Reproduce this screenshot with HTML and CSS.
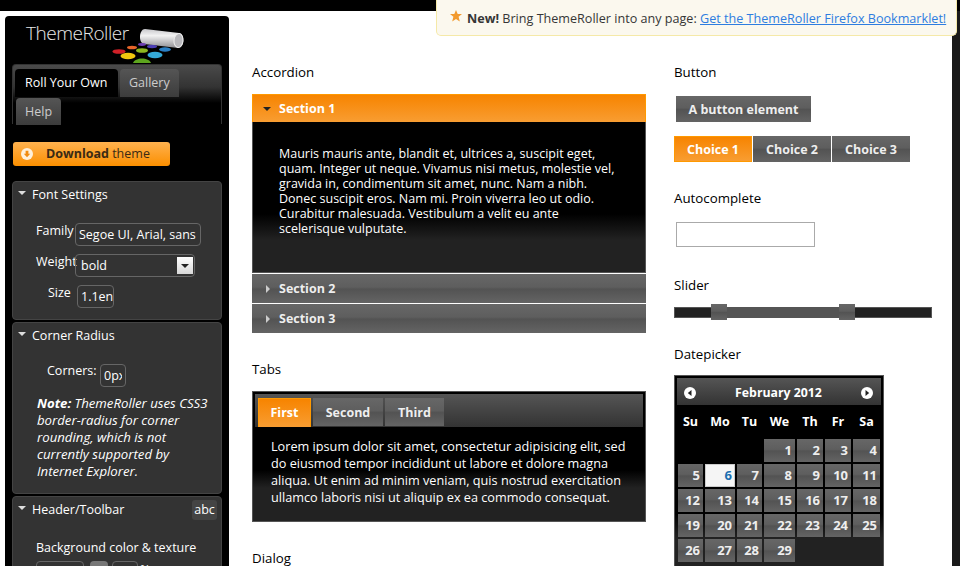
FILE: index.html
```html
<!DOCTYPE html>
<html lang="en">
<head>
<meta charset="utf-8">
<title>ThemeRoller</title>
<link rel="stylesheet" href="styles.css">
</head>
<body>
<div class="topband"></div>
<div class="shell">
  <div class="content">
    <aside class="sidebar">
      <div class="brand">
        <span class="brand-name">ThemeRoller</span>
        <svg class="brand-art" width="76" height="36" viewBox="110 28 76 36">
          <defs>
            <linearGradient id="rollerFill" x1="0" y1="0" x2="0" y2="1">
              <stop offset="0" stop-color="#c8c8cc"/><stop offset=".35" stop-color="#f2f2f2"/><stop offset="1" stop-color="#8f8f94"/>
            </linearGradient>
          </defs>
          <path d="M145 29 L179 33 C185 34 185 48 178 48 L144 44 C138 43 139 29 145 29Z" fill="url(#rollerFill)"/>
          <ellipse cx="178.500" cy="40.500" rx="4.500" ry="7" transform="rotate(6 178.500 40.500)" fill="#b9b9bd" stroke="#eee"/>
          <ellipse cx="119" cy="51.500" rx="6.500" ry="2.300" fill="#cf2027"/>
          <ellipse cx="132" cy="47.500" rx="5" ry="1.800" fill="#e8652a"/>
          <ellipse cx="142" cy="44.500" rx="4" ry="1.400" fill="#6d3fb0"/>
          <ellipse cx="152" cy="46.500" rx="5" ry="1.700" fill="#4c3fb5"/>
          <ellipse cx="142" cy="50.500" rx="6" ry="2.300" fill="#8db81f"/>
          <ellipse cx="165" cy="49.500" rx="6" ry="2.200" fill="#2a7fc4"/>
          <ellipse cx="128" cy="56" rx="7.500" ry="3.200" fill="#f2c80f"/>
          <ellipse cx="155" cy="55" rx="7.500" ry="3.200" fill="#35a9d8"/>
          <path d="M133 63 C135 57 149 57 151 63Z" fill="#5da51e"/>
        </svg>
      </div>

      <div class="side-tabs">
        <a class="side-tab side-tab-on">Roll Your Own</a>
        <a class="side-tab">Gallery</a>
        <a class="side-tab side-tab-help">Help</a>
      </div>

      <a class="download">
        <svg class="download-icon" width="12" height="12" viewBox="0 0 12 12"><circle cx="6" cy="6" r="6" fill="#fff0da"/><path d="M4.600 2.800h2.800v3h1.800L6 9.200 2.800 5.800h1.800z" fill="#f28c10"/></svg>
        <span class="download-text"><b>Download</b> theme</span>
      </a>

      <section class="panel panel-font">
        <h3 class="panel-head"><i class="tri-down"></i>Font Settings</h3>
        <div class="field field-family">
          <label class="field-label">Family</label>
          <span class="box box-family"><span class="box-clip">Segoe UI, Arial, sans</span></span>
        </div>
        <div class="field field-weight">
          <label class="field-label">Weight</label>
          <span class="box box-weight">bold<i class="select-arrow"><i class="tri-dark"></i></i></span>
        </div>
        <div class="field field-size">
          <label class="field-label">Size</label>
          <span class="box box-size"><span class="box-clip">1.1en</span></span>
        </div>
      </section>

      <section class="panel panel-corner">
        <h3 class="panel-head"><i class="tri-down"></i>Corner Radius</h3>
        <div class="field field-corners">
          <label class="field-label">Corners:</label>
          <span class="box box-corners"><span class="box-clip">0px</span></span>
        </div>
        <p class="note"><b>Note:</b> ThemeRoller uses CSS3 border-radius for corner rounding, which is not currently supported by Internet Explorer.</p>
      </section>

      <section class="panel panel-header">
        <h3 class="panel-head"><i class="tri-down"></i>Header/Toolbar<span class="abc">abc</span></h3>
        <div class="bg-label">Background color &amp; texture</div>
        <div class="bg-row">
          <span class="box box-color"></span>
          <span class="swatch"></span>
          <span class="box box-pct"></span>
          <span class="pct">%</span>
        </div>
      </section>
    </aside>

    <main class="col-left">
      <h2 class="title title-first">Accordion</h2>
      <div class="accordion">
        <h3 class="acc-head acc-head-on"><i class="tri-dark"></i>Section 1</h3>
        <div class="acc-body">
          <p>Mauris mauris ante, blandit et, ultrices a, suscipit eget, quam. Integer ut neque. Vivamus nisi metus, molestie vel, gravida in, condimentum sit amet, nunc. Nam a nibh. Donec suscipit eros. Nam mi. Proin viverra leo ut odio. Curabitur malesuada. Vestibulum a velit eu ante scelerisque vulputate.</p>
        </div>
        <h3 class="acc-head glass"><i class="tri-right"></i>Section 2</h3>
        <h3 class="acc-head glass"><i class="tri-right"></i>Section 3</h3>
      </div>

      <h2 class="title title-tabs">Tabs</h2>
      <div class="tabs">
        <div class="tab-bar">
          <a class="tab tab-on">First</a>
          <a class="tab glass">Second</a>
          <a class="tab glass">Third</a>
        </div>
        <p class="tab-body">Lorem ipsum dolor sit amet, consectetur adipisicing elit, sed do eiusmod tempor incididunt ut labore et dolore magna aliqua. Ut enim ad minim veniam, quis nostrud exercitation ullamco laboris nisi ut aliquip ex ea commodo consequat.</p>
      </div>

      <h2 class="title title-dialog">Dialog</h2>
    </main>

    <div class="col-right">
      <h2 class="title title-first">Button</h2>
      <a class="btn btn-single glass">A button element</a>
      <div class="btn-set">
        <a class="btn btn-choice btn-on">Choice 1</a>
        <a class="btn btn-choice glass">Choice 2</a>
        <a class="btn btn-choice glass">Choice 3</a>
      </div>

      <h2 class="title title-auto">Autocomplete</h2>
      <div class="auto-input"></div>

      <h2 class="title title-slider">Slider</h2>
      <div class="slider">
        <span class="slider-end slider-end-a"></span>
        <span class="handle glass"></span>
        <span class="slider-range"></span>
        <span class="handle glass"></span>
        <span class="slider-end"></span>
      </div>

      <h2 class="title title-date">Datepicker</h2>
      <div class="datepicker">
        <div class="dp-head">
          <svg class="dp-nav" width="12" height="12" viewBox="0 0 12 12"><circle cx="6" cy="6" r="6" fill="#fff"/><path d="M7.500 3v6L3.800 6z" fill="#222"/></svg>
          <span class="dp-month">February 2012</span>
          <svg class="dp-nav" width="12" height="12" viewBox="0 0 12 12"><circle cx="6" cy="6" r="6" fill="#fff"/><path d="M4.500 3v6L8.200 6z" fill="#222"/></svg>
        </div>
        <div class="dp-grid">
          <span class="dp-dow">Su</span><span class="dp-dow">Mo</span><span class="dp-dow">Tu</span><span class="dp-dow">We</span><span class="dp-dow">Th</span><span class="dp-dow">Fr</span><span class="dp-dow">Sa</span>
          <span></span><span></span><span></span>
          <a class="dp-day glass">1</a><a class="dp-day glass">2</a><a class="dp-day glass">3</a><a class="dp-day glass">4</a>
          <a class="dp-day glass">5</a><a class="dp-day dp-today">6</a><a class="dp-day glass">7</a><a class="dp-day glass">8</a><a class="dp-day glass">9</a><a class="dp-day glass">10</a><a class="dp-day glass">11</a>
          <a class="dp-day glass">12</a><a class="dp-day glass">13</a><a class="dp-day glass">14</a><a class="dp-day glass">15</a><a class="dp-day glass">16</a><a class="dp-day glass">17</a><a class="dp-day glass">18</a>
          <a class="dp-day glass">19</a><a class="dp-day glass">20</a><a class="dp-day glass">21</a><a class="dp-day glass">22</a><a class="dp-day glass">23</a><a class="dp-day glass">24</a><a class="dp-day glass">25</a>
          <a class="dp-day glass">26</a><a class="dp-day glass">27</a><a class="dp-day glass">28</a><a class="dp-day glass">29</a>
        </div>
      </div>
    </div>
  </div>
</div>

<div class="notice">
  <svg class="notice-star" width="12" height="12" viewBox="0 0 12 12"><path d="M6 0l1.700 4H12L8.600 6.800 9.800 11.500 6 8.900 2.200 11.500 3.400 6.800 0 4h4.300z" fill="#f29a2e"/></svg>
  <span class="notice-text"><b>New!</b> Bring ThemeRoller into any page: <a class="notice-link">Get the ThemeRoller Firefox Bookmarklet!</a></span>
</div>
</body>
</html>
```

FILE: styles.css
```css
* { box-sizing: border-box; }
html, body { margin: 0; padding: 0; height: 566px; overflow: hidden; background: #fff; }
body { font: 12.5px/17px "Open Sans", "Noto Sans", sans-serif; color: #000; }
h2, h3, p { margin: 0; font-size: inherit; font-weight: normal; }
i { font-style: normal; }

.topband { height: 11px; background: #000; }
.shell { background: #1a1a1a; padding-right: 8px; height: 555px; }
.content { display: flex; background: #fff; height: 555px; padding-left: 5px; overflow: hidden; }

/* sidebar */
.sidebar { width: 224px; flex: none; margin-top: 5px; height: 700px; padding: 0 7px; background: #000; border-radius: 4px 4px 0 0; color: #fff; }
.brand { position: relative; height: 48px; padding: 5px 0 0 14px; }
.brand-name { font-size: 19px; line-height: 24px; font-weight: 300; color: #e8e8e8; letter-spacing: -.45px; }
.brand-art { position: absolute; left: 98px; top: 12px; }
.side-tabs { height: 60px; padding: 4px 2px 0; display: flex; flex-wrap: wrap; align-content: flex-start; column-gap: 2px; row-gap: 1px; border-radius: 4px 4px 0 0; border: 1px solid #333; border-bottom: 0; background: linear-gradient(#4a4a4a 0, #333 22px, #000 38px); }
.side-tab { height: 28px; line-height: 27px; padding: 0 9px; color: #ccc; background: linear-gradient(#555, #3c3c3c); border-radius: 4px 4px 0 0; }
.side-tab-on { width: 103px; padding: 0 10px; background: #000; color: #fff; }
.side-tab-help { height: 27px; margin-left: 1px; }
.download { display: flex; align-items: center; width: 157px; height: 24px; margin: 18px 0 15px 1px; padding-left: 8px; border-radius: 3px; background: linear-gradient(#ffb24f, #fb8f00); color: #3a2a14; font-size: 12.5px; line-height: 22px; }
.download-icon { flex: none; }
.download-text { margin-left: 13px; white-space: nowrap; }
.panel { width: 210px; background: #333; border: 1px solid #444; border-radius: 4px; margin-bottom: 2px; position: relative; }
.panel-font { height: 139px; }
.panel-corner { height: 172px; }
.panel-header { height: 120px; }
.panel-head { display: flex; align-items: center; height: 26px; padding: 0 0 2px 5px; }
.tri-down { width: 0; height: 0; margin-right: 6px; border: 4px solid transparent; border-top: 4px solid #ddd; border-bottom: 0; margin-top: -3px; }
.tri-dark { display: inline-block; width: 0; height: 0; border: 4px solid transparent; border-top: 4px solid #222; border-bottom: 0; }
.tri-right { display: inline-block; width: 0; height: 0; border: 4px solid transparent; border-left: 4px solid #ccc; border-right: 0; }
.abc { align-self: flex-start; margin: 3px 4px 0 auto; width: 25px; height: 20px; line-height: 20px; text-align: center; background: #444; border-radius: 3px; }
.field { display: flex; }
.field-family { margin-top: 15px; padding-left: 23px; }
.field-weight { margin-top: 8px; padding-left: 23px; }
.field-size { margin-top: 8px; padding-left: 35px; }
.field-corners { margin-top: 15px; padding-left: 34px; }
.field-label { display: block; white-space: nowrap; margin-top: -1px; }
.field-family .field-label { width: 39px; }
.field-weight .field-label { width: 39px; }
.field-size .field-label { width: 29px; }
.field-corners .field-label { width: 53px; margin-top: -2px; }
.box { display: block; height: 23px; line-height: 22px; border: 1px solid #666; border-radius: 4px; padding-left: 3px; color: #fff; white-space: nowrap; overflow: hidden; flex: none; }
.box-clip { display: block; overflow: hidden; }
.box-family { width: 126px; }
.box-weight { position: relative; width: 120px; padding-left: 5px; }
.select-arrow { position: absolute; right: 1px; top: 2px; width: 16px; height: 17px; display: flex; align-items: center; justify-content: center; background: linear-gradient(#fff, #d8d8d8); }
.box-size { width: 37px; }
.box-corners { width: 26px; }
.box-corners .box-clip { width: 18px; }
.note { margin: 8px 0 0 24px; width: 178px; font-style: italic; font-size: 13.2px; }
.bg-label { margin: 16px 0 0 23px; }
.bg-row { display: flex; align-items: flex-start; margin: 5px 0 0 23px; }
.box-color { width: 48px; }
.swatch { width: 18px; height: 18px; margin: 0 4px 0 6px; background: #777; border-radius: 4px; }
.box-pct { width: 26px; }
.pct { margin-left: 2px; }

/* columns */
.col-left { width: 394px; margin-left: 23px; flex: none; }
.col-right { width: 258px; margin-left: 28px; flex: none; }
.title { font-size: 13.3px; line-height: 18px; }
.title-first { margin-top: 52px; }
.title-tabs { margin-top: 27px; }
.title-dialog { margin-top: 27px; }
.title-auto { margin-top: 27px; }
.title-slider { margin-top: 29px; }
.title-date { margin-top: 25px; }
.glass { color: #eee; background: linear-gradient(#676767 0, #5e5e5e 45%, #535353 52%, #5b5b5b 75%, #646464 100%); }

/* accordion */
.accordion { margin-top: 13px; color: #fff; }
.acc-head { display: flex; align-items: center; height: 29px; margin-top: 1px; font-weight: 700; color: #eee; }
.acc-head i { margin: 0 8px 0 13px; }
.acc-head .tri-right { margin-left: 14px; margin-right: 9px; }
.acc-head-on { height: 28px; margin-top: 0; color: #fff; border: 1px solid #f90; border-bottom: 0; background: linear-gradient(#f78400, #f89d32); }
.acc-head-on i { margin-left: 10px; }
.acc-body { height: 151px; padding: 24px 26px 0; border: 1px solid #555; border-top: 0; background: linear-gradient(#000 0, #000 92px, #222 118px); }
.acc-body p { line-height: 15px; }

/* tabs */
.title-tabs + .tabs { margin-top: 13px; }
.tabs { height: 131px; padding: 2px; border: 1px solid #555; background: linear-gradient(#000 0, #000 78px, #222 96px); color: #fff; }
.tab-bar { display: flex; height: 33px; padding: 4px 0 0 3px; gap: 2px; background: linear-gradient(#555, #333); }
.tab { height: 28px; line-height: 29px; font-size: 12.5px; font-weight: 700; text-align: center; }
.tab:nth-child(1) { width: 53px; height: 29px; }
.tab:nth-child(2) { width: 70px; }
.tab:nth-child(3) { width: 59px; }
.tab-on { color: #fff; border: 1px solid #f90; border-bottom: 0; background: linear-gradient(#f78400, #f89d32); line-height: 28px; }
.tab-body { padding: 11px 14px 0 16px; line-height: 17px; font-size: 12.7px; }

/* buttons */
.btn { display: block; height: 26px; line-height: 27px; text-align: center; font-weight: 700; }
.btn-single { width: 135px; margin: 15px 0 0 2px; }
.btn-set { display: flex; gap: 1px; margin-top: 14px; }
.btn-choice { width: 78px; }
.btn-on { color: #fff; border: 1px solid #f90; background: linear-gradient(#f78400, #f89d32); line-height: 25px; }
.auto-input { width: 139px; height: 25px; margin: 15px 0 0 2px; border: 1px solid #aaa; background: #fff; }

/* slider */
.slider { display: flex; align-items: center; height: 16px; margin-top: 10px; }
.slider-end { flex: 1; height: 11px; background: #222; border: 1px solid #555; border-left: 0; }
.slider-end-a { flex: none; width: 37px; border: 1px solid #555; border-right: 0; }
.handle { flex: none; width: 16px; height: 16px; }
.slider-range { flex: none; width: 112px; height: 11px; background: #555; }

/* datepicker */
.datepicker { width: 210px; height: 200px; margin-top: 12px; padding: 2px; border: 1px solid #555; background: linear-gradient(#000 0, #000 138px, #222 162px); color: #fff; }
.dp-head { display: flex; align-items: center; justify-content: space-between; height: 27px; padding: 2px 8px 0 7px; background: linear-gradient(#555, #333); }
.dp-month { font-size: 12.3px; font-weight: 700; }
.dp-grid { display: grid; grid-template-columns: 25px 30px 25px 31px 26px 26px 27px; grid-template-rows: 27px; grid-auto-rows: 23px; column-gap: 2px; row-gap: 2px; margin: 5px 0 0 1px; }
.dp-dow { height: 23px; text-align: center; font-weight: 700; line-height: 23px; }
.dp-day { display: block; text-align: right; padding-right: 3px; font-weight: 700; font-size: 13px; line-height: 23px; }
.dp-today { background: #f5f5f5; border: 1px solid #ccc; color: #1c6fb0; line-height: 21px; padding-right: 2px; }

/* notice */
.notice { position: absolute; left: 436px; top: 0; width: 521px; height: 36px; display: flex; align-items: center; padding: 1px 0 0 13px; gap: 5px; border: 1px solid #f5e9a8; border-top: 0; border-radius: 0 0 5px 5px; background: #fbf8ee; color: #363636; white-space: nowrap; line-height: 19px; }
.notice-text { font-size: 12.6px; }
.notice-star { margin-top: -5px; flex: none; }
.notice-link { color: #2e7de0; text-decoration: underline; }
```
